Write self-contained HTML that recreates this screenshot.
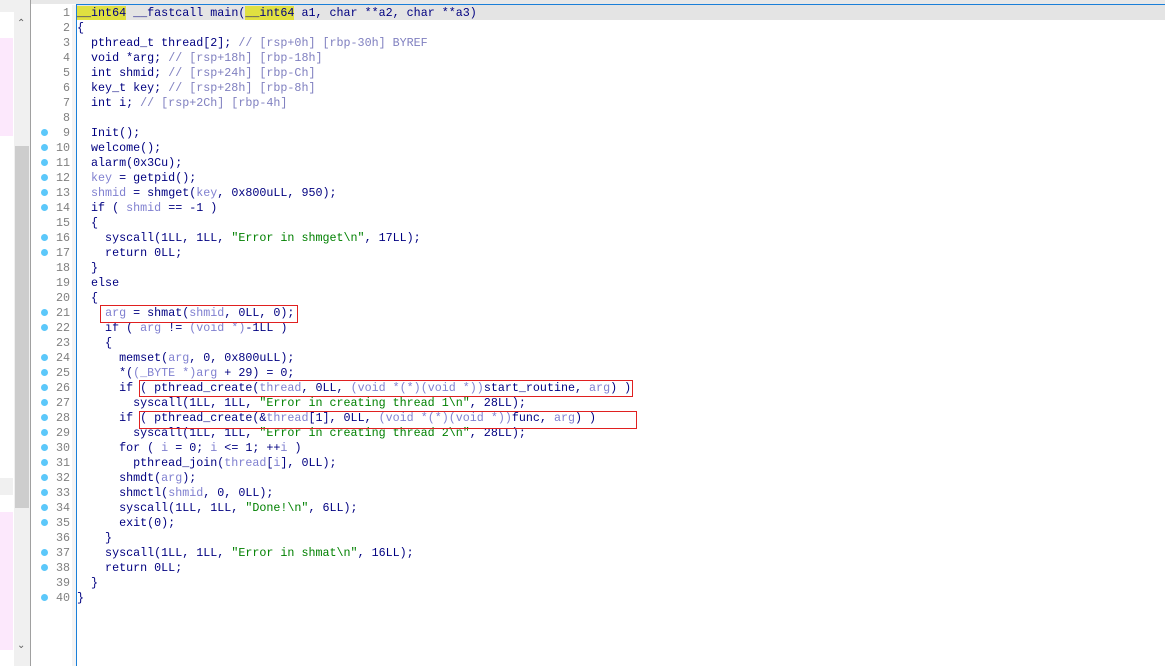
<!DOCTYPE html>
<html><head><meta charset="utf-8"><style>
body{margin:0;width:1165px;height:666px;overflow:hidden;background:#fff;position:relative;font-family:"Liberation Mono",monospace;}
.abs{position:absolute}
.code{position:absolute;left:77px;top:6px;font-size:11.7px;line-height:15px;white-space:pre;color:#000080}
.ln{position:absolute;left:36px;top:6px;width:34px;text-align:right;font-size:11.7px;line-height:15px;white-space:pre;color:#808080}
.v{color:#8080d0}.c{color:#8080c0}.s{color:#008000}
.hl{background:#e0e040}
.dot{position:absolute;left:41px;width:7px;height:7px;border-radius:50%;background:#5cc8fa}
.box{position:absolute;border:1px solid #e02020}
</style></head><body>
<div class="abs" style="left:0;top:0;width:1165px;height:4px;background:#e8e8e8"></div>
<div class="abs" style="left:76px;top:4px;width:1089px;height:1px;background:#1a7fd8"></div>
<div class="abs" style="left:77px;top:5px;width:1088px;height:15px;background:#e4e4e4"></div>
<div class="abs" style="left:76px;top:4px;width:1px;height:662px;background:#1a7fd8"></div>
<div class="abs" style="left:0;top:0;width:14px;height:666px;background:#fff"></div>
<div class="abs" style="left:0;top:0;width:14px;height:12px;background:#f0f0f0"></div>
<div class="abs" style="left:0;top:38px;width:13px;height:98px;background:#fce8fc"></div>
<div class="abs" style="left:0;top:478px;width:13px;height:17px;background:#f0f0f0"></div>
<div class="abs" style="left:0;top:512px;width:13px;height:138px;background:#fce8fc"></div>
<div class="abs" style="left:14px;top:0;width:16px;height:666px;background:#f0f0f0"></div>
<div class="abs" style="left:15px;top:146px;width:14px;height:362px;background:#cdcdcd"></div>
<div class="abs" style="left:17px;top:18px;font-size:10px;color:#606060;font-family:'DejaVu Sans'">&#8963;</div>
<div class="abs" style="left:17px;top:640px;font-size:10px;color:#606060;font-family:'DejaVu Sans'">&#8964;</div>
<div class="abs" style="left:30px;top:0;width:1px;height:666px;background:#a0a0a0"></div>
<div class="abs" style="left:72px;top:5px;width:4px;height:661px;background:#f4f4f4"></div>
<div class="ln">1
2
3
4
5
6
7
8
9
10
11
12
13
14
15
16
17
18
19
20
21
22
23
24
25
26
27
28
29
30
31
32
33
34
35
36
37
38
39
40</div>
<div class="dot" style="top:129px"></div><div class="dot" style="top:144px"></div><div class="dot" style="top:159px"></div><div class="dot" style="top:174px"></div><div class="dot" style="top:189px"></div><div class="dot" style="top:204px"></div>
<div class="dot" style="top:234px"></div><div class="dot" style="top:249px"></div>
<div class="dot" style="top:309px"></div><div class="dot" style="top:324px"></div>
<div class="dot" style="top:354px"></div><div class="dot" style="top:369px"></div><div class="dot" style="top:384px"></div><div class="dot" style="top:399px"></div><div class="dot" style="top:414px"></div><div class="dot" style="top:429px"></div><div class="dot" style="top:444px"></div><div class="dot" style="top:459px"></div><div class="dot" style="top:474px"></div><div class="dot" style="top:489px"></div><div class="dot" style="top:504px"></div><div class="dot" style="top:519px"></div>
<div class="dot" style="top:549px"></div><div class="dot" style="top:564px"></div>
<div class="dot" style="top:594px"></div>
<div class="code"><span class="hl">__int64</span> __fastcall main(<span class="hl">__int64</span> a1, char **a2, char **a3)
{
  pthread_t thread[2]; <span class="c">// [rsp+0h] [rbp-30h] BYREF</span>
  void *arg; <span class="c">// [rsp+18h] [rbp-18h]</span>
  int shmid; <span class="c">// [rsp+24h] [rbp-Ch]</span>
  key_t key; <span class="c">// [rsp+28h] [rbp-8h]</span>
  int i; <span class="c">// [rsp+2Ch] [rbp-4h]</span>

  Init();
  welcome();
  alarm(0x3Cu);
  <span class="v">key</span> = getpid();
  <span class="v">shmid</span> = shmget(<span class="v">key</span>, 0x800uLL, 950);
  if ( <span class="v">shmid</span> == -1 )
  {
    syscall(1LL, 1LL, <span class="s">"Error in shmget\n"</span>, 17LL);
    return 0LL;
  }
  else
  {
    <span class="v">arg</span> = shmat(<span class="v">shmid</span>, 0LL, 0);
    if ( <span class="v">arg</span> != <span class="v">(void *)</span>-1LL )
    {
      memset(<span class="v">arg</span>, 0, 0x800uLL);
      *(<span class="v">(_BYTE *)</span><span class="v">arg</span> + 29) = 0;
      if ( pthread_create(<span class="v">thread</span>, 0LL, <span class="v">(void *(*)(void *))</span>start_routine, <span class="v">arg</span>) )
        syscall(1LL, 1LL, <span class="s">"Error in creating thread 1\n"</span>, 28LL);
      if ( pthread_create(&amp;<span class="v">thread</span>[1], 0LL, <span class="v">(void *(*)(void *))</span>func, <span class="v">arg</span>) )
        syscall(1LL, 1LL, <span class="s">"Error in creating thread 2\n"</span>, 28LL);
      for ( <span class="v">i</span> = 0; <span class="v">i</span> &lt;= 1; ++<span class="v">i</span> )
        pthread_join(<span class="v">thread</span>[<span class="v">i</span>], 0LL);
      shmdt(<span class="v">arg</span>);
      shmctl(<span class="v">shmid</span>, 0, 0LL);
      syscall(1LL, 1LL, <span class="s">"Done!\n"</span>, 6LL);
      exit(0);
    }
    syscall(1LL, 1LL, <span class="s">"Error in shmat\n"</span>, 16LL);
    return 0LL;
  }
}</div>
<div class="box" style="left:100px;top:305px;width:196px;height:16px"></div>
<div class="box" style="left:139px;top:380px;width:492px;height:15px"></div>
<div class="box" style="left:139px;top:411px;width:496px;height:16px"></div>
</body></html>
